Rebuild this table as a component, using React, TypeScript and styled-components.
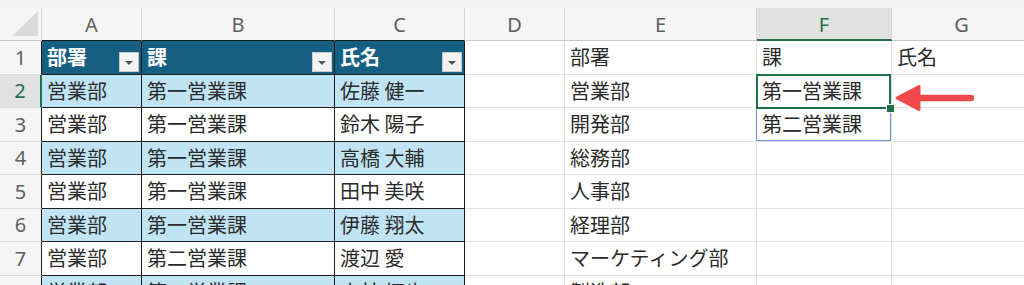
import React from "react";
import styled, { createGlobalStyle, css } from "styled-components";

const GlobalStyle = createGlobalStyle`
  html, body { margin: 0; padding: 0; background: #ffffff; overflow: hidden; }
  body { font-family: "Noto Sans CJK JP", "Noto Sans", sans-serif; }
`;

const GREEN = "#1e7145";
const TABLE_LINE = "#1b1b1b";
const GRID_LINE = "#e1e1e1";

const Page = styled.div`
  position: relative;
  width: 1024px;
  height: 285px;
  overflow: hidden;
  background: #ffffff;
`;

const TopStrip = styled.div`
  height: 8px;
  background: #f1f1f1;
`;

const Sheet = styled.div`
  display: grid;
  grid-template-columns: 42px 100px 193px 130px 100px 192px 135px 140px;
  grid-template-rows: 33px repeat(8, 33.5px);
  width: 1032px;
`;

const Corner = styled.div`
  background: #f5f5f5;
  border-right: 1px solid #d6d6d6;
  border-bottom: 1px solid #c8c8c8;
  box-sizing: border-box;
  display: flex;
  align-items: flex-end;
  justify-content: flex-end;
  padding: 0 3px 4px 0;
`;

const CornerTriangle = styled.div`
  width: 26px;
  height: 25px;
  background: #d9d9d9;
  clip-path: polygon(100% 0, 100% 100%, 0 100%);
`;

const ColHeader = styled.div<{ $active?: boolean; $table?: boolean }>`
  box-sizing: border-box;
  background: ${(p) => (p.$active ? "#e1e1e1" : "#f5f5f5")};
  color: ${(p) => (p.$active ? GREEN : "#5e5e5e")};
  border-right: 1px solid #d6d6d6;
  border-bottom: ${(p) =>
    p.$active ? `2px solid ${GREEN}` : p.$table ? `1px solid ${TABLE_LINE}` : "1px solid #c8c8c8"};
  font-family: "Noto Sans", "Open Sans", sans-serif;
  font-size: 20px;
  display: flex;
  align-items: center;
  justify-content: center;
  padding-top: 1px;
`;

const RowHeader = styled.div<{ $active?: boolean; $table?: boolean }>`
  box-sizing: border-box;
  background: ${(p) => (p.$active ? "#e1e1e1" : "#f5f5f5")};
  color: ${(p) => (p.$active ? GREEN : "#5e5e5e")};
  border-bottom: 1px solid #dadada;
  border-right: ${(p) =>
    p.$active ? `2px solid ${GREEN}` : p.$table ? `1px solid ${TABLE_LINE}` : "1px solid #c8c8c8"};
  font-family: "Noto Sans", "Open Sans", sans-serif;
  font-size: 20px;
  display: flex;
  align-items: center;
  justify-content: center;
`;

type Kind = "head" | "band" | "plain" | "grid";

const Cell = styled.div<{ $kind: Kind }>`
  position: relative;
  box-sizing: border-box;
  display: flex;
  align-items: center;
  padding: 0 4px 0 5px;
  font-size: 20px;
  white-space: nowrap;
  color: #2b2b2b;
  ${(p) =>
    p.$kind === "grid"
      ? css`
          background: #ffffff;
          border-right: 1px solid ${GRID_LINE};
          border-bottom: 1px solid ${GRID_LINE};
        `
      : css`
          border-right: 1px solid ${TABLE_LINE};
          border-bottom: 1px solid ${TABLE_LINE};
        `}
  ${(p) =>
    p.$kind === "head" &&
    css`
      background: #156082;
      color: #ffffff;
      font-weight: 700;
      padding-right: 2px;
    `}
  ${(p) => p.$kind === "band" && css`background: #c1e4f5;`}
  ${(p) => p.$kind === "plain" && css`background: #ffffff;`}
`;

const CellText = styled.span`
  flex: 1;
  line-height: 1.3;
`;

const FilterButton = styled.div`
  align-self: flex-end;
  margin-bottom: 2px;
  width: 20px;
  height: 20px;
  flex-shrink: 0;
  box-sizing: border-box;
  background: #f4f4f4;
  border: 1px solid #c9c9c9;
  display: flex;
  align-items: center;
  justify-content: center;
  &::after {
    content: "";
    width: 0;
    height: 0;
    border-left: 4px solid transparent;
    border-right: 4px solid transparent;
    border-top: 4px solid #555555;
    margin-top: 2px;
  }
`;

const ActiveFrame = styled.div`
  position: absolute;
  top: -1px;
  left: -1px;
  right: 0;
  bottom: -2px;
  border: 2px solid ${GREEN};
  z-index: 3;
  pointer-events: none;
`;

const FillHandle = styled.div`
  position: absolute;
  right: -5px;
  bottom: -5px;
  width: 7px;
  height: 7px;
  background: ${GREEN};
  outline: 1px solid #ffffff;
`;

const RangeFrame = styled.div`
  position: absolute;
  top: -1px;
  left: -1px;
  right: 0;
  bottom: 0;
  border: 1px solid #6f93d6;
  z-index: 2;
  pointer-events: none;
`;

const Arrow = styled.svg`
  position: absolute;
  left: 890px;
  top: 80px;
  width: 90px;
  height: 36px;
  z-index: 5;
`;

const letters = ["A", "B", "C", "D", "E", "F", "G"];

const tableRows: string[][] = [
  ["部署", "課", "氏名"],
  ["営業部", "第一営業課", "佐藤 健一"],
  ["営業部", "第一営業課", "鈴木 陽子"],
  ["営業部", "第一営業課", "高橋 大輔"],
  ["営業部", "第一営業課", "田中 美咲"],
  ["営業部", "第一営業課", "伊藤 翔太"],
  ["営業部", "第二営業課", "渡辺 愛"],
  ["営業部", "第一営業課", "小林 拓也"],
];

const sideRows: string[][] = [
  ["", "部署", "課", "氏名"],
  ["", "営業部", "第一営業課", ""],
  ["", "開発部", "第二営業課", ""],
  ["", "総務部", "", ""],
  ["", "人事部", "", ""],
  ["", "経理部", "", ""],
  ["", "マーケティング部", "", ""],
  ["", "製造部", "", ""],
];

export default function App() {
  return (
    <Page>
      <GlobalStyle />
      <TopStrip />
      <Sheet>
        <Corner>
          <CornerTriangle />
        </Corner>
        {letters.map((l, i) => (
          <ColHeader key={l} $active={l === "F"} $table={i < 3}>
            {l}
          </ColHeader>
        ))}
        {tableRows.map((row, r) => {
          const kind: Kind = r === 0 ? "head" : r % 2 === 1 ? "band" : "plain";
          return (
            <React.Fragment key={r}>
              <RowHeader $active={r === 1} $table>
                {r + 1}
              </RowHeader>
              {row.map((v, c) => (
                <Cell key={c} $kind={kind}>
                  <CellText>{v}</CellText>
                  {r === 0 && <FilterButton />}
                </Cell>
              ))}
              {sideRows[r].map((v, c) => (
                <Cell key={`s${c}`} $kind="grid">
                  <CellText>{v}</CellText>
                  {r === 1 && c === 2 && (
                    <ActiveFrame>
                      <FillHandle />
                    </ActiveFrame>
                  )}
                  {r === 2 && c === 2 && <RangeFrame />}
                </Cell>
              ))}
            </React.Fragment>
          );
        })}
      </Sheet>
      <Arrow viewBox="0 0 90 36">
        <line x1="30" y1="18" x2="81" y2="18" stroke="#f1484b" strokeWidth="6.5" strokeLinecap="round" />
        <path
          d="M7 18 L29 6.5 L29 29.5 Z"
          fill="#f1484b"
          stroke="#f1484b"
          strokeWidth="3"
          strokeLinejoin="round"
        />
      </Arrow>
    </Page>
  );
}
